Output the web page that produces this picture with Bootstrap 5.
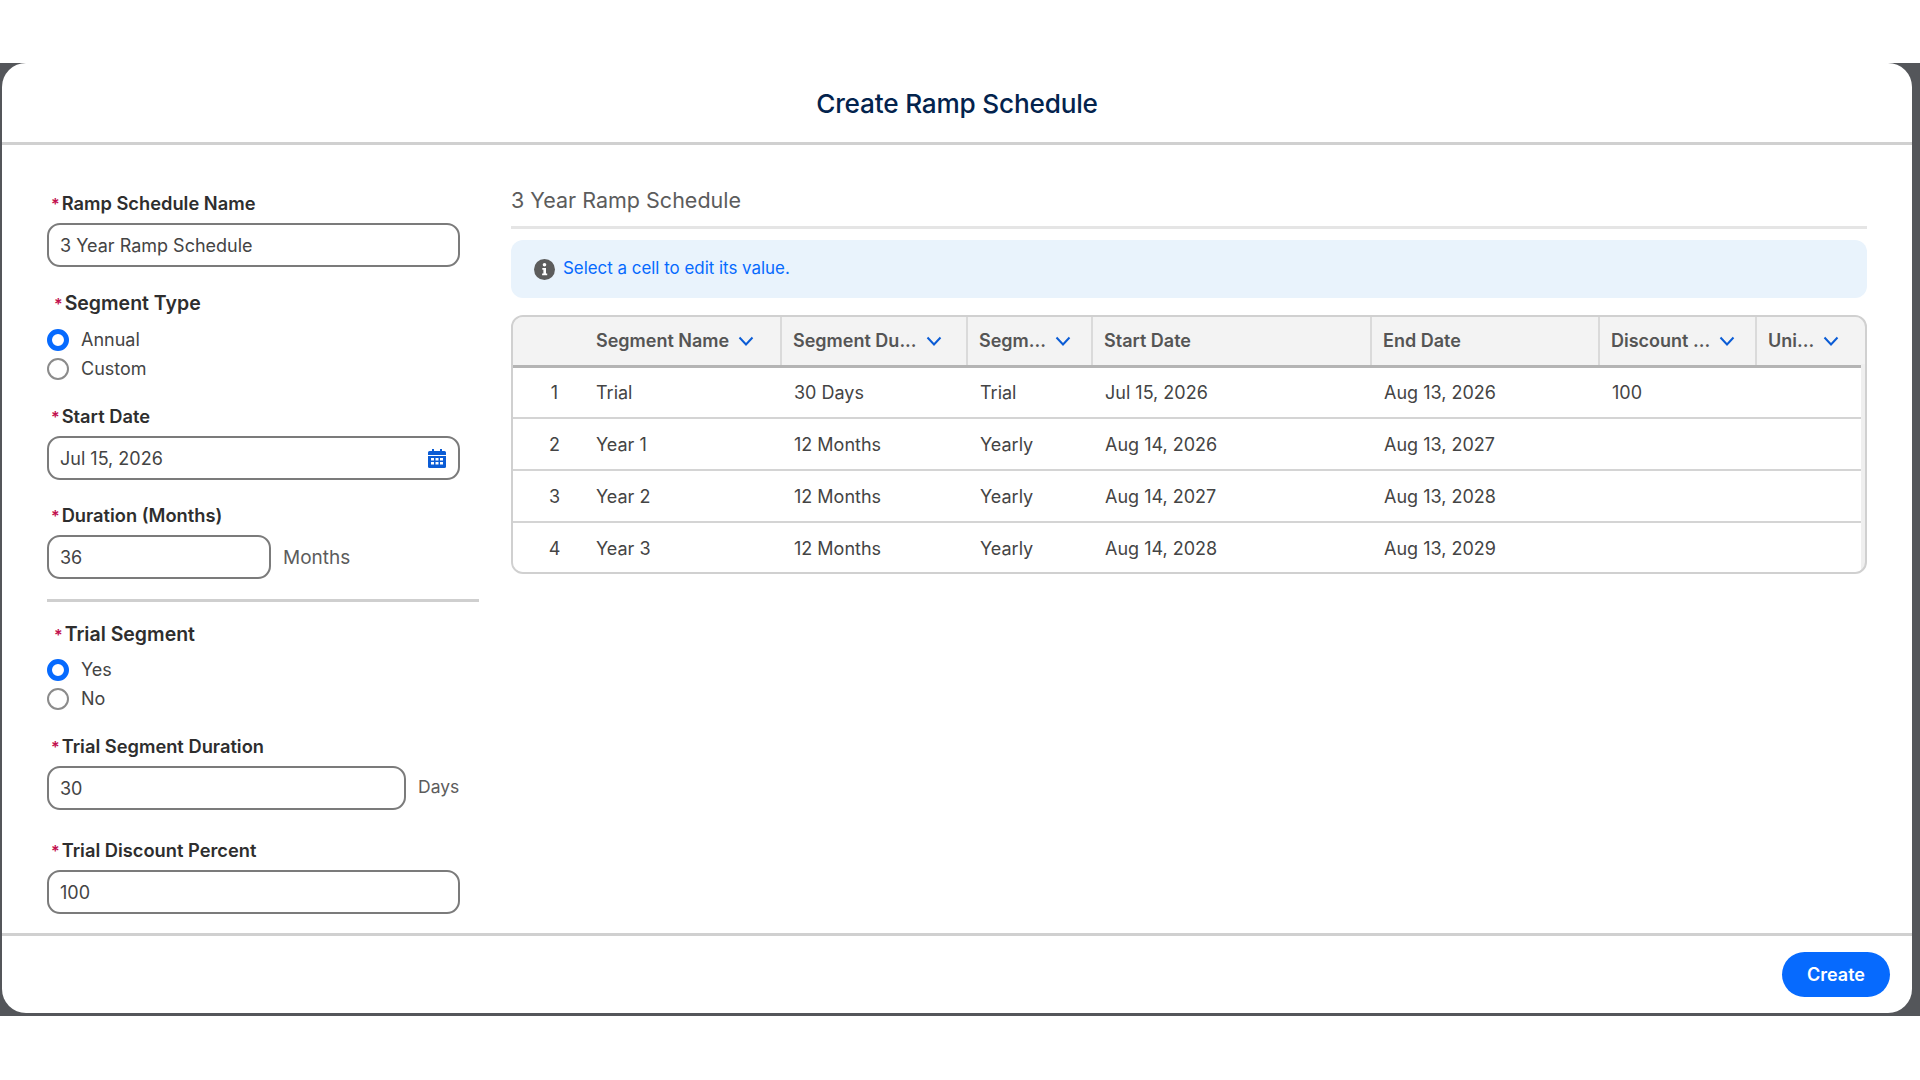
<!DOCTYPE html>
<html lang="en">
<head>
  <meta charset="UTF-8" />
  <meta name="viewport" content="width=device-width, initial-scale=1.0" />
  <title>Create Ramp Schedule</title>
  <link href="https://cdn.jsdelivr.net/npm/bootstrap@5.3.0/dist/css/bootstrap.min.css" rel="stylesheet" />
  <style>
    body { background: #fff; font-family: Inter, "Liberation Sans", sans-serif; font-size: 18px; color: #444; overflow: hidden; }
    .backdrop { margin-top: 63px; height: 953px; background: #54565a; padding: 0 8px 3px 2px; }
    .sheet { height: 100%; background: #fff; border-radius: 24px; }
    .sheet-head { height: 82px; padding-top: 3px; border-bottom: 3px solid #d0d0d0; }
    .sheet-title { font-size: 26.200px; font-weight: 500; color: #03234d; margin: 0; letter-spacing: -.2px; }
    .sheet-body { height: 788px; padding: 46px 45px 0; }
    .sheet-foot { height: 80px; border-top: 3px solid #d0d0d0; padding-right: 22px; }

    .left-col { width: 432px; }
    .right-col { margin-left: 32px; margin-top: -6px; min-width: 0; }

    .req-label { display: block; font-size: 18.300px; line-height: 24px; font-weight: 600; color: #2e2e2e; padding-left: 4px; margin-bottom: 7px; }
    .req-label.big { font-size: 19.500px; padding-left: 7px; margin-bottom: 9px; }
    .req-label.big.tight { margin-bottom: 8px; }
    .req-star { color: #c2104f; margin-right: 2px; font-size: 16px; }
    .gap-a { margin-top: 24px; }
    .gap-b { margin-top: 21px; }
    .gap-c { margin-top: 23px; }
    .gap-d { margin-top: 28px; }
    .gap-e { margin-top: 20px; }
    .gap-f { margin-top: 21px; }

    .ramp-input.form-control { height: 44px; border: 2px solid #7b7b7b; border-radius: 13px; padding: 0 11px; font-size: 18px; color: #444; box-shadow: none; }
    .w-full { width: 413px; }
    .w-months { width: 224px; }
    .w-days { width: 359px; }
    .unit-big { font-size: 19px; color: #5c5c5c; margin-left: 12px; margin-top: 2px; }
    .unit-small { font-size: 17.500px; color: #5c5c5c; margin-left: 12px; margin-top: -2px; }
    .cal-icon { position: absolute; right: 14px; top: 13px; }

    .radio-row { height: 29px; margin: 0; padding: 0; min-height: 0; }
    .radio-row .form-check-input { float: none; width: 22px; height: 22px; margin: 0 12px 0 0; border: 2px solid #8b8b8b; background-image: none !important; box-shadow: none; }
    .radio-row .form-check-input:checked { background-color: #fff; border: 5.500px solid #066afe; }
    .radio-row .form-check-label { font-size: 18px; color: #444; }

    .split-line { border: 0; height: 3px; background: #cfcfcf; opacity: 1; margin: 20px 0 0; }

    .sched-title { font-size: 21.500px; line-height: 30px; color: #5c5c5c; padding-bottom: 11px; border-bottom: 3px solid #e5e5e5; }
    .info-bar { height: 58px; margin-top: 11px; padding-left: 23px; background: #e9f3fc; border-radius: 12px; color: #066afe; font-size: 16.900px; }

    .sched-wrap { margin-top: 17px; height: 259px; border: 2px solid #d0d0d0; border-radius: 12px; overflow: hidden; padding-right: 4px; background: linear-gradient(#f3f3f3 47px, #efefef 47px); }
    .sched-table { table-layout: fixed; width: 1348px; margin: 0; color: #444; font-size: 18px; }
    .sched-table > :not(caption) > * > * { padding: 0 0 0 11px; border-bottom: 2px solid #d4d4d4; color: #444; vertical-align: middle; background: #fff; box-shadow: none; white-space: nowrap; }
    .sched-table > thead > tr > th { height: 49px; background: #f3f3f3; font-weight: 600; color: #555; border-bottom: 3px solid #b4b4b4; border-left: 2px solid #dadada; }
    .sched-table > thead > tr > th.no-split { border-left: 0; padding-left: 12px; }
    .sched-table > tbody > tr > td { height: 52px; }
    .sched-table > tbody > tr > td.first-text { padding-left: 12px; }
    .sched-table > tbody > tr > td.row-num { padding: 0 0 0 12px; text-align: center; }
    .sched-table > tbody > tr > td:not(.row-num):not(.first-text) { padding-left: 13px; }
    .col-1a { width: 71px; } .col-1b { width: 197px; } .col-1c { width: 186px; } .col-1d { width: 125px; }
    .col-1e { width: 279px; } .col-1f { width: 228px; } .col-1g { width: 157px; } .col-1h { width: 105px; }
    .chev { margin-left: 9px; vertical-align: 1px; }

    .btn-create.btn { width: 108px; height: 45px; padding: 0; background: #066afe; border: 0; border-radius: 23px; color: #fff; font-size: 18px; font-weight: 600; }
  </style>
</head>
<body>
<div class="backdrop">
  <div class="sheet d-flex flex-column">
    <div class="sheet-head d-flex align-items-center justify-content-center">
      <h1 class="sheet-title">Create Ramp Schedule</h1>
    </div>

    <div class="sheet-body d-flex">
      <div class="left-col flex-shrink-0">
        <label class="req-label"><span class="req-star">*</span>Ramp Schedule Name</label>
        <div class="w-full"><input class="form-control ramp-input" type="text" value="3 Year Ramp Schedule" /></div>

        <label class="req-label big gap-a"><span class="req-star">*</span>Segment Type</label>
        <div class="form-check radio-row d-flex align-items-center">
          <input class="form-check-input" type="radio" name="segType" id="segAnnual" checked />
          <label class="form-check-label" for="segAnnual">Annual</label>
        </div>
        <div class="form-check radio-row d-flex align-items-center">
          <input class="form-check-input" type="radio" name="segType" id="segCustom" />
          <label class="form-check-label" for="segCustom">Custom</label>
        </div>

        <label class="req-label gap-b"><span class="req-star">*</span>Start Date</label>
        <div class="w-full position-relative">
          <input class="form-control ramp-input" type="text" value="Jul 15, 2026" />
          <svg class="cal-icon" width="18" height="19" viewBox="0 0 18 19">
            <path fill="#0b5cd5" d="M4 0h2v2h6V0h2v2h2.500A1.500 1.500 0 0 1 18 3.500V6H0V3.500A1.500 1.500 0 0 1 1.500 2H4z"/>
            <path fill="#0b5cd5" d="M0 7h18v10.500a1.500 1.500 0 0 1-1.500 1.500h-15A1.500 1.500 0 0 1 0 17.500z"/>
            <path fill="#fff" d="M3 9h3v2.500H3zM7.500 9h3v2.500h-3zM12 9h3v2.500h-3zM3 13h3v2.500H3zM7.500 13h3v2.500h-3zM12 13h3v2.500h-3z"/>
          </svg>
        </div>

        <label class="req-label gap-c"><span class="req-star">*</span>Duration (Months)</label>
        <div class="d-flex align-items-center">
          <div class="w-months"><input class="form-control ramp-input" type="text" value="36" /></div>
          <span class="unit-big">Months</span>
        </div>

        <hr class="split-line" />

        <label class="req-label big tight gap-e"><span class="req-star">*</span>Trial Segment</label>
        <div class="form-check radio-row d-flex align-items-center">
          <input class="form-check-input" type="radio" name="trial" id="trialYes" checked />
          <label class="form-check-label" for="trialYes">Yes</label>
        </div>
        <div class="form-check radio-row d-flex align-items-center">
          <input class="form-check-input" type="radio" name="trial" id="trialNo" />
          <label class="form-check-label" for="trialNo">No</label>
        </div>

        <label class="req-label gap-f"><span class="req-star">*</span>Trial Segment Duration</label>
        <div class="d-flex align-items-center">
          <div class="w-days"><input class="form-control ramp-input" type="text" value="30" /></div>
          <span class="unit-small">Days</span>
        </div>

        <label class="req-label gap-d"><span class="req-star">*</span>Trial Discount Percent</label>
        <div class="w-full"><input class="form-control ramp-input" type="text" value="100" /></div>
      </div>

      <div class="right-col flex-grow-1">
        <div class="sched-title">3 Year Ramp Schedule</div>
        <div class="info-bar d-flex align-items-center">
          <svg class="me-2" width="21" height="21" viewBox="0 0 21 21">
            <circle cx="10.500" cy="10.500" r="10.500" fill="#5c5c5c"/>
            <circle cx="10.500" cy="5.800" r="1.800" fill="#fff"/>
            <path fill="#fff" d="M8.300 9h3.700v5.600h1.200v1.700H8.100v-1.700h1.300v-3.900H8.300z"/>
          </svg>
          <span>Select a cell to edit its value.</span>
        </div>

        <div class="sched-wrap">
          <table class="table sched-table">
            <colgroup>
              <col class="col-1a"><col class="col-1b"><col class="col-1c"><col class="col-1d">
              <col class="col-1e"><col class="col-1f"><col class="col-1g"><col class="col-1h">
            </colgroup>
            <thead>
              <tr>
                <th class="no-split"></th>
                <th class="no-split">Segment Name<svg class="chev" width="16" height="10" viewBox="0 0 16 10"><path d="M1.500 1.500 8 8.500l6.500-7" fill="none" stroke="#0b5cd5" stroke-width="2"/></svg></th>
                <th>Segment Du...<svg class="chev" width="16" height="10" viewBox="0 0 16 10"><path d="M1.500 1.500 8 8.500l6.500-7" fill="none" stroke="#0b5cd5" stroke-width="2"/></svg></th>
                <th>Segm...<svg class="chev" width="16" height="10" viewBox="0 0 16 10"><path d="M1.500 1.500 8 8.500l6.500-7" fill="none" stroke="#0b5cd5" stroke-width="2"/></svg></th>
                <th>Start Date</th>
                <th>End Date</th>
                <th>Discount ...<svg class="chev" width="16" height="10" viewBox="0 0 16 10"><path d="M1.500 1.500 8 8.500l6.500-7" fill="none" stroke="#0b5cd5" stroke-width="2"/></svg></th>
                <th>Uni...<svg class="chev" width="16" height="10" viewBox="0 0 16 10"><path d="M1.500 1.500 8 8.500l6.500-7" fill="none" stroke="#0b5cd5" stroke-width="2"/></svg></th>
              </tr>
            </thead>
            <tbody>
              <tr><td class="row-num">1</td><td class="first-text">Trial</td><td>30 Days</td><td>Trial</td><td>Jul 15, 2026</td><td>Aug 13, 2026</td><td>100</td><td></td></tr>
              <tr><td class="row-num">2</td><td class="first-text">Year 1</td><td>12 Months</td><td>Yearly</td><td>Aug 14, 2026</td><td>Aug 13, 2027</td><td></td><td></td></tr>
              <tr><td class="row-num">3</td><td class="first-text">Year 2</td><td>12 Months</td><td>Yearly</td><td>Aug 14, 2027</td><td>Aug 13, 2028</td><td></td><td></td></tr>
              <tr><td class="row-num">4</td><td class="first-text">Year 3</td><td>12 Months</td><td>Yearly</td><td>Aug 14, 2028</td><td>Aug 13, 2029</td><td></td><td></td></tr>
            </tbody>
          </table>
        </div>
      </div>
    </div>

    <div class="sheet-foot d-flex align-items-center justify-content-end">
      <button class="btn btn-create" type="button">Create</button>
    </div>
  </div>
</div>
<script src="https://cdn.jsdelivr.net/npm/bootstrap@5.3.0/dist/js/bootstrap.bundle.min.js"></script>
</body>
</html>
